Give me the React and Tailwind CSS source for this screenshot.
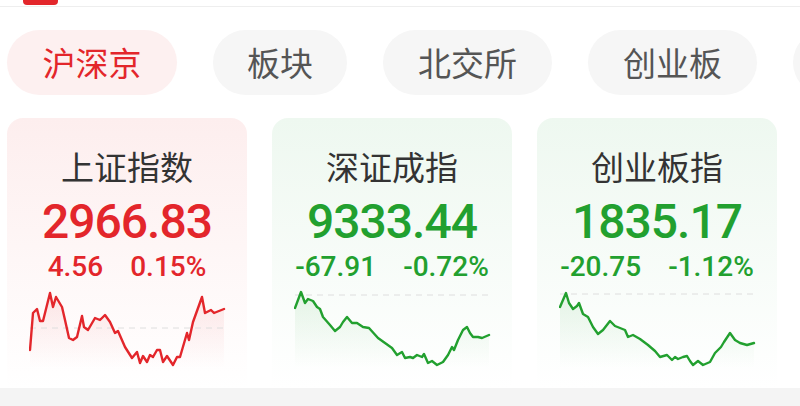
import React from 'react';

const tabs = [
    { label: '沪深京', w: 'w-[170px]', active: true },
    { label: '板块', w: 'w-[134px]' },
    { label: '北交所', w: 'w-[169px]' },
    { label: '创业板', w: 'w-[169px]' },
    { label: '', w: 'w-[169px]' },
];

// chart points in page coords, shifted into each card's chart box
const cards = [
    {
        id: 'sh',
        name: '上证指数',
        price: '2966.83',
        change: '4.56',
        pct: '0.15%',
        up: true,
        ox: 29,
        base: 328,
        pts: [[30,350],[33,313],[37,309],[40,321],[43,321],[47,305],[50,293],[53,307],[56,297],[62,307],[65,320],[69,338],[73,340],[77,337],[82,316],[84,327],[88,330],[95,318],[100,320],[105,315],[110,322],[115,333],[118,331],[125,347],[132,358],[137,352],[140,363],[143,356],[147,362],[150,355],[153,357],[157,350],[160,350],[163,362],[167,356],[173,365],[177,357],[180,357],[187,333],[189,340],[193,322],[202,297],[205,313],[211,310],[214,313],[224,309]],
    },
    {
        id: 'sz',
        name: '深证成指',
        price: '9333.44',
        change: '-67.91',
        pct: '-0.72%',
        ox: 294,
        base: 295,
        pts: [[295,308],[301,292],[305,303],[308,299],[313,301],[317,307],[320,309],[323,317],[330,325],[335,331],[340,327],[343,322],[347,317],[352,323],[357,323],[363,327],[369,328],[378,338],[385,343],[392,348],[397,355],[402,352],[405,358],[410,357],[413,358],[417,355],[422,357],[424,354],[428,363],[432,361],[437,365],[443,362],[448,355],[452,347],[454,350],[458,340],[463,330],[467,327],[470,333],[473,337],[478,337],[482,338],[489,335]],
    },
    {
        id: 'cy',
        name: '创业板指',
        price: '1835.17',
        change: '-20.75',
        pct: '-1.12%',
        ox: 559,
        base: 294,
        pts: [[560,307],[566,293],[569,303],[573,309],[577,306],[579,303],[583,314],[588,317],[593,327],[598,334],[603,330],[610,321],[615,326],[620,328],[625,330],[628,337],[633,335],[640,339],[648,345],[655,351],[660,357],[667,355],[672,360],[675,357],[678,359],[683,357],[687,356],[690,361],[693,365],[698,361],[703,365],[710,362],[715,353],[717,351],[721,347],[724,342],[730,333],[735,340],[740,343],[747,345],[754,343]],
    },
];

function Spark({ card }) {
    const color = card.up ? '#e3262b' : '#22a02f';
    const pts = card.pts.map(([x, y]) => [x - card.ox, y - 288]);
    const line = pts.map((p) => p.join(',')).join(' ');
    const first = pts[0];
    const last = pts[pts.length - 1];
    const area = `${first[0]},80 ${line} ${last[0]},80`;
    const by = card.base - 288;

    return (
        <svg width="200" height="80" viewBox="0 0 200 80" className="block">
            <defs>
                <linearGradient id={`fill-${card.id}`} x1="0" y1="0" x2="0" y2="1">
                    <stop offset="0%" stopColor={color} stopOpacity="0.1" />
                    <stop offset="100%" stopColor={color} stopOpacity="0" />
                </linearGradient>
            </defs>
            <polygon points={area} fill={`url(#fill-${card.id})`} />
            <line x1={first[0]} y1={by} x2={last[0]} y2={by} stroke="#dedede" strokeWidth="1" strokeDasharray="6 5" />
            <polyline points={line} fill="none" stroke={color} strokeWidth="2.4" strokeLinejoin="round" strokeLinecap="round" />
        </svg>
    );
}

function IndexCard({ card }) {
    const txt = card.up ? 'text-[#e3262b]' : 'text-[#22a02f]';
    return (
        <div
            className={`w-[240px] h-[270px] shrink-0 rounded-t-[16px] pt-[28px] flex flex-col bg-gradient-to-b to-white
            ${card.up ? 'from-[#fdeeee]' : 'from-[#eef8f0]'}`}
        >
            <p className="text-center text-[33px] leading-[40px] text-[#333] font-['Noto_Sans_CJK_SC',sans-serif]">
                {card.name}
            </p>
            <p className={`mt-[12px] text-center text-[48px] leading-[48px] font-medium tracking-[-1px] font-['Roboto',sans-serif] ${txt}`}>
                {card.price}
            </p>
            <div className={`mt-[7px] flex justify-center gap-[27px] text-[28px] leading-[28px] font-medium font-['Roboto',sans-serif] ${txt}`}>
                <span>{card.change}</span>
                <span>{card.pct}</span>
            </div>
            <div className="mt-[7px] pl-[22px]">
                <Spark card={card} />
            </div>
        </div>
    );
}

export default function App() {
    return (
        <div className="w-[800px] h-[406px] overflow-hidden bg-white flex flex-col">
            {/* top indicator */}
            <div className="h-[7px] border-b border-[#eeeeee] shrink-0">
                <div className="ml-[23px] w-[35px] h-[5px] rounded-b-[4px] bg-[#e3262b]" />
            </div>

            {/* market tabs */}
            <div className="mt-[23px] flex gap-[36px] pl-[7px] shrink-0">
                {tabs.map((t, i) => (
                    <div
                        key={i}
                        className={`${t.w} h-[65px] shrink-0 rounded-full flex items-center justify-center text-[33px]
                        font-['Noto_Sans_CJK_SC',sans-serif]
                        ${t.active ? 'bg-[#fdf0f0] text-[#e3262b]' : 'bg-[#f6f6f6] text-[#555]'}`}
                    >
                        {t.label}
                    </div>
                ))}
            </div>

            {/* index cards */}
            <div className="mt-[23px] flex gap-[25px] pl-[7px] shrink-0">
                {cards.map((c) => (
                    <IndexCard key={c.id} card={c} />
                ))}
                <div className="w-[240px] h-[270px] shrink-0 rounded-t-[16px] bg-gradient-to-b from-[#eef8f0] to-white" />
            </div>

            <div className="flex-1 bg-[#f4f4f4]" />
        </div>
    );
}
